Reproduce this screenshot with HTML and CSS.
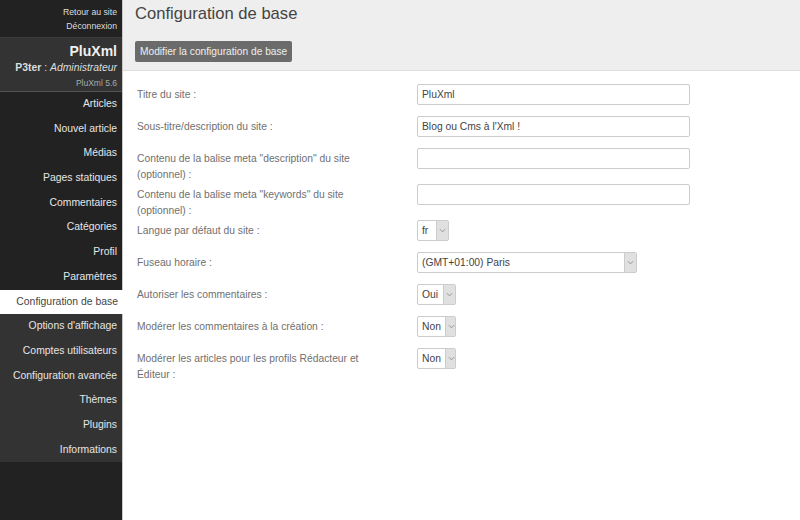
FILE: index.html
```html
<!DOCTYPE html>
<html lang="fr">
<head>
<meta charset="utf-8">
<title>Configuration de base</title>
<link rel="stylesheet" href="styles.css">
</head>
<body>
<div class="app">
  <aside class="sidebar">
    <div class="toplinks">
      <a href="#">Retour au site</a>
      <a href="#">Déconnexion</a>
    </div>
    <div class="brand">
      <div class="brand-name">PluXml</div>
      <div class="brand-user"><strong>P3ter</strong> : <em>Administrateur</em></div>
      <div class="brand-version">PluXml 5.6</div>
    </div>
    <nav class="menu">
      <a href="#">Articles</a>
      <a href="#">Nouvel article</a>
      <a href="#">Médias</a>
      <a href="#">Pages statiques</a>
      <a href="#">Commentaires</a>
      <a href="#">Catégories</a>
      <a href="#">Profil</a>
      <a href="#">Paramètres</a>
      <a href="#" class="active">Configuration de base</a>
      <div class="submenu">
        <a href="#">Options d'affichage</a>
        <a href="#">Comptes utilisateurs</a>
        <a href="#">Configuration avancée</a>
        <a href="#">Thèmes</a>
        <a href="#">Plugins</a>
        <a href="#">Informations</a>
      </div>
    </nav>
  </aside>
  <main class="main">
    <header class="head">
      <h1>Configuration de base</h1>
      <button class="btn">Modifier la configuration de base</button>
    </header>
    <form class="form">
      <div class="row">
        <label>Titre du site :</label>
        <span class="input">PluXml</span>
      </div>
      <div class="row">
        <label>Sous-titre/description du site :</label>
        <span class="input">Blog ou Cms à l'Xml !</span>
      </div>
      <div class="row">
        <label>Contenu de la balise meta "description" du site (optionnel) :</label>
        <span class="input"></span>
      </div>
      <div class="row">
        <label>Contenu de la balise meta "keywords" du site (optionnel) :</label>
        <span class="input"></span>
      </div>
      <div class="row">
        <label>Langue par défaut du site :</label>
        <span class="select sm"><span class="val">fr</span><span class="arrow"><svg viewBox="0 0 8 5" width="7" height="5"><path d="M1 1l3 3 3-3" fill="none" stroke="#888" stroke-width="1"/></svg></span></span>
      </div>
      <div class="row">
        <label>Fuseau horaire :</label>
        <span class="select wide"><span class="val">(GMT+01:00) Paris</span><span class="arrow"><svg viewBox="0 0 8 5" width="7" height="5"><path d="M1 1l3 3 3-3" fill="none" stroke="#888" stroke-width="1"/></svg></span></span>
      </div>
      <div class="row">
        <label>Autoriser les commentaires :</label>
        <span class="select md"><span class="val">Oui</span><span class="arrow"><svg viewBox="0 0 8 5" width="7" height="5"><path d="M1 1l3 3 3-3" fill="none" stroke="#888" stroke-width="1"/></svg></span></span>
      </div>
      <div class="row">
        <label>Modérer les commentaires à la création :</label>
        <span class="select md"><span class="val">Non</span><span class="arrow"><svg viewBox="0 0 8 5" width="7" height="5"><path d="M1 1l3 3 3-3" fill="none" stroke="#888" stroke-width="1"/></svg></span></span>
      </div>
      <div class="row">
        <label>Modérer les articles pour les profils Rédacteur et Éditeur :</label>
        <span class="select md"><span class="val">Non</span><span class="arrow"><svg viewBox="0 0 8 5" width="7" height="5"><path d="M1 1l3 3 3-3" fill="none" stroke="#888" stroke-width="1"/></svg></span></span>
      </div>
    </form>
  </main>
</div>
</body>
</html>
```
FILE: styles.css
```css
html, body {
  margin: 0;
  padding: 0;
  height: 100%;
}
body {
  font-family: "Liberation Sans", Arial, sans-serif;
  background: #fff;
}
.app {
  display: flex;
  height: 520px;
}
.sidebar {
  width: 122px;
  flex: none;
  background: #222;
  border-right: 1px solid #c8c8c8;
  display: flex;
  flex-direction: column;
}
.sidebar a {
  text-decoration: none;
}
.toplinks {
  display: flex;
  flex-direction: column;
  align-items: flex-end;
  padding: 5px 5px 0 0;
  height: 32px;
}
.toplinks a {
  color: #ddd;
  font-size: 8.7px;
  line-height: 14px;
}
.brand {
  background: #333;
  border-top: 1px solid #3c3c3c;
  border-bottom: 1px solid #555;
  height: 53px;
  text-align: right;
  padding-right: 5px;
  color: #ddd;
}
.brand-name {
  font-size: 14px;
  font-weight: bold;
  color: #f0f0f0;
  line-height: 16px;
  padding-top: 5px;
}
.brand-user {
  font-size: 10.4px;
  line-height: 15px;
  color: #ddd;
  padding-top: 1px;
}
.brand-version {
  font-size: 8.5px;
  line-height: 14px;
  color: #aaa;
  padding-top: 1px;
}
.menu {
  display: flex;
  flex-direction: column;
}
.menu a {
  display: block;
  height: 24.7px;
  line-height: 24.7px;
  text-align: right;
  padding-right: 5px;
  font-size: 10.4px;
  color: #e6e6e6;
}
.menu a.active {
  background: #fff;
  color: #444;
  margin-right: -1px;
}
.submenu {
  background: #333;
}
.main {
  flex: 1;
  min-width: 0;
}
.head {
  background: #eee;
  border-bottom: 1px solid #ddd;
  height: 71px;
  padding: 0 12px;
  box-sizing: border-box;
}
.head h1 {
  margin: 0;
  padding-top: 3px;
  font-size: 16.6px;
  font-weight: normal;
  color: #444;
  line-height: 22px;
}
.btn {
  margin-top: 16px;
  height: 21px;
  padding: 0 5px;
  border: none;
  border-radius: 2px;
  background: #6b6b6b;
  color: #eee;
  font-family: inherit;
  font-size: 10.2px;
}
.form {
  padding: 13px 0 0 14px;
}
.row {
  display: grid;
  grid-template-columns: 280px auto;
  align-items: start;
  min-height: 30px;
  margin-bottom: 2px;
}
.row label {
  font-size: 10.3px;
  line-height: 16px;
  color: #707070;
  padding-top: 3px;
  margin-bottom: -1px;
  max-width: 240px;
}
.input {
  display: block;
  box-sizing: border-box;
  width: 273px;
  height: 21px;
  border: 1px solid #ccc;
  border-radius: 2px;
  padding: 0 4px;
  font-size: 10.3px;
  line-height: 19px;
  color: #444;
}
.select {
  display: inline-flex;
  justify-self: start;
  box-sizing: border-box;
  height: 21px;
  border: 1px solid #ccc;
  border-radius: 2px;
  font-size: 10.3px;
  color: #444;
  overflow: hidden;
}
.select .val {
  padding: 0 4px;
  line-height: 19px;
  flex: 1;
}
.select.sm {
  width: 32px;
}
.select.md {
  width: 39px;
}
.select.wide {
  width: 220px;
}
.select .arrow {
  width: 11px;
  flex: none;
  background: #e0e0e0;
  border-left: 1px solid #ccc;
  display: flex;
  align-items: center;
  justify-content: center;
}
```
